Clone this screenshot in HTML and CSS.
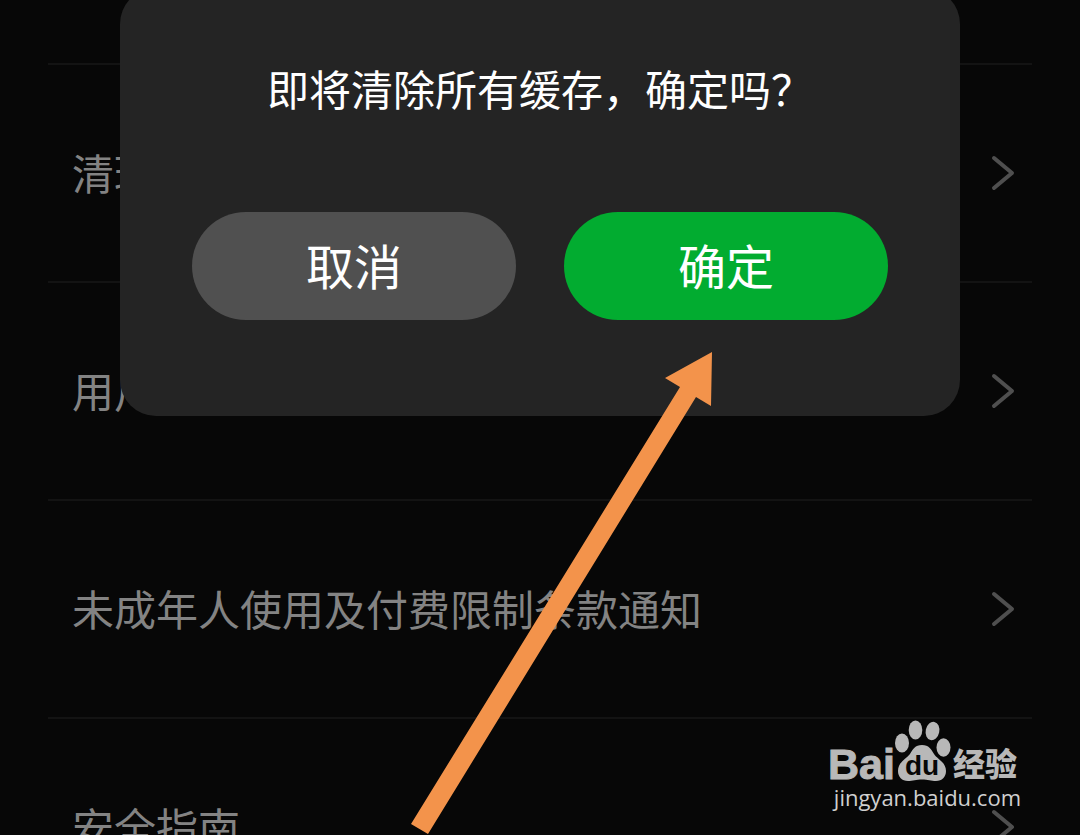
FILE: index.html
```html
<!DOCTYPE html>
<html lang="zh-CN">
<head>
    <meta charset="UTF-8">
    <meta name="viewport" content="width=device-width, initial-scale=1.0">
    <title>设置</title>

    <link rel="stylesheet" href="styles.css">
</head>
<body>
    <div class="screen">
        <nav class="list">
            <a class="item" href="#">
                <span>清理缓存</span>
                <svg class="arrow" viewBox="0 0 24 36"><path d="M3 3L21 18L3 33"/></svg>
            </a>
            <a class="item" href="#">
                <span>用户协议</span>
                <svg class="arrow" viewBox="0 0 24 36"><path d="M3 3L21 18L3 33"/></svg>
            </a>
            <a class="item" href="#">
                <span>未成年人使用及付费限制条款通知</span>
                <svg class="arrow" viewBox="0 0 24 36"><path d="M3 3L21 18L3 33"/></svg>
            </a>
            <a class="item" href="#">
                <span>安全指南</span>
                <svg class="arrow" viewBox="0 0 24 36"><path d="M3 3L21 18L3 33"/></svg>
            </a>
        </nav>

        <div class="dialog" role="dialog" aria-labelledby="msg">
            <div class="msg" id="msg">即将清除所有缓存，确定吗？</div>
            <div class="buttons">
                <button class="btn cancel">取消</button>
                <button class="btn ok">确定</button>
            </div>
        </div>

        <svg class="pointer" viewBox="0 0 301 482">
            <polygon points="301,0 254,26 269,35 0,472 17,482 285,45 300,54"/>
        </svg>

        <div class="mark">
            <div class="logo">
                <span class="bai">Bai</span>
                <span class="paw">
                    <svg viewBox="0 0 56 62">
                        <ellipse cx="7" cy="23" rx="7" ry="9.5"/>
                        <ellipse cx="20.5" cy="10" rx="6.8" ry="9.5"/>
                        <ellipse cx="37.5" cy="11" rx="6.8" ry="9.3" transform="rotate(12 37.5 11)"/>
                        <ellipse cx="48.5" cy="27.5" rx="7" ry="9.2"/>
                        <path d="M27 25C34 25 36 29 39 34C42 39 51 42 51 51C51 57 47 61 41 61C36 61 33 59.500 27 59.500C21 59.500 18 61 13 61C7 61 3 57 3 51C3 42 11 39 15 34C18 29 20 25 27 25Z"/>
                    </svg>
                    <span class="du">du</span>
                </span>
                <span class="jy">经验</span>
            </div>
            <div class="site">jingyan.baidu.com</div>
        </div>
    </div>
</body>
</html>
```

FILE: styles.css
```css
body{
    margin: 0;
    background-color: #070707;
    font-family: "Noto Sans CJK SC", sans-serif;
}
.screen{
    position: relative;
    height: 100vh;
    overflow: hidden;
}
.list{
    padding: 63px 48px 0;
}
.item{
    display: flex;
    align-items: center;
    justify-content: space-between;
    height: 216px;
    padding: 0 17px 0 24px;
    border-top: 2px solid #131313;
    color: #838383;
    font-size: 42px;
    text-decoration: none;
}
.item span{
    padding-bottom: 4px;
}
.arrow{
    width: 24px;
    height: 36px;
    fill: none;
    stroke: #4f4f4f;
    stroke-width: 4px;
    stroke-linecap: round;
    stroke-linejoin: round;
}

/* dialog over the list */
.dialog{
    position: absolute;
    top: -12px;
    left: 120px;
    right: 120px;
    padding: 70px 72px 96px;
    border-radius: 36px;
    background-color: #242424;
}
.msg{
    color: white;
    font-size: 42px;
    line-height: 60px;
    text-align: center;
}
.buttons{
    display: flex;
    gap: 48px;
    margin-top: 94px;
}
.btn{
    flex: 1;
    height: 108px;
    padding: 0 0 4px;
    border: none;
    border-radius: 54px;
    color: white;
    font-family: inherit;
    font-size: 48px;
}
.cancel{
    background-color: #505050;
}
.ok{
    background-color: #02ac30;
}

.pointer{
    position: absolute;
    left: 411px;
    top: 352px;
    width: 301px;
    height: 482px;
    fill: #f3934b;
}

/* watermark */
.mark{
    position: absolute;
    right: 59px;
    bottom: 23px;
    color: #b8b8b8;
}
.logo{
    display: flex;
    align-items: flex-end;
    height: 62px;
    padding-right: 4px;
}
.bai{
    font-family: "Liberation Sans", sans-serif;
    font-size: 43px;
    font-weight: bold;
    line-height: 36px;
    -webkit-text-stroke: 1px #b8b8b8;
}
.paw{
    position: relative;
    width: 56px;
    height: 62px;
}
.paw svg{
    width: 56px;
    height: 62px;
    fill: #b8b8b8;
}
.du{
    position: absolute;
    left: 0;
    right: 2px;
    bottom: 2px;
    color: #070707;
    font-family: "Liberation Sans", sans-serif;
    font-size: 28px;
    font-weight: bold;
    line-height: 28px;
    text-align: center;
}
.jy{
    margin-left: 2px;
    font-size: 32px;
    font-weight: 900;
    line-height: 40px;
}
.site{
    color: #d0d0d0;
    font-family: "Open Sans", sans-serif;
    font-size: 22px;
    font-weight: 500;
    line-height: 30px;
    text-align: right;
}
```
